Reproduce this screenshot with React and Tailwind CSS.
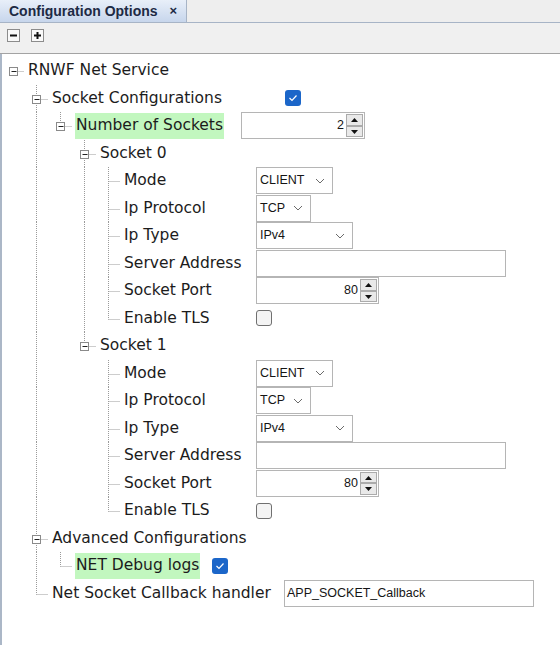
import React from "react";

const treeFont = { fontFamily: '"DejaVu Sans", Verdana, sans-serif' };

// one 24px column of the tree guides, drawn as svg
const Guide = ({ width = 24, vert = "none", stub = false, box = false }) => {
  const cx = width === 22 ? 11.5 : 12.5;
  const cy = 14.5;
  return (
    <svg width={width} height="27.5" className="shrink-0">
      {vert !== "none" && (
        <line
          x1={cx}
          y1="0"
          x2={cx}
          y2={vert === "full" ? 27.5 : cy}
          stroke="#9a9a9a"
          strokeDasharray="1 1"
        />
      )}
      {stub && (
        <line x1={cx} y1={cy} x2={width} y2={cy} stroke="#9a9a9a" strokeDasharray="1 1" />
      )}
      {box && (
        <g>
          <rect x={cx - 4} y={cy - 4} width="8" height="8" fill="#fff" stroke="#8a8a8a" />
          <line x1={cx - 2} y1={cy} x2={cx + 3} y2={cy} stroke="#222" />
        </g>
      )}
    </svg>
  );
};

const Chevron = () => (
  <svg width="10" height="6" viewBox="0 0 10 6">
    <polyline points="1,1 5,5 9,1" fill="none" stroke="#6b6b6b" strokeWidth="1" />
  </svg>
);

const Select = ({ value, w }) => (
  <div
    className={`${w} h-[27px] border border-[#b5b5b5] bg-white flex items-center justify-between pl-[3px] pr-[7px] text-[12.5px] text-[#151515]`}
    style={{ fontFamily: '"Liberation Sans", Arial, sans-serif' }}
  >
    <span>{value}</span>
    <Chevron />
  </div>
);

const TextField = ({ value = "", w }) => (
  <div
    className={`${w} h-[27px] border border-[#b5b5b5] bg-white flex items-center pl-[2px] text-[12.5px] text-[#151515]`}
    style={{ fontFamily: '"Liberation Sans", Arial, sans-serif' }}
  >
    {value}
  </div>
);

const Arrow = ({ up }) => (
  <svg width="7" height="4" viewBox="0 0 7 4">
    <polygon points={up ? "0,4 7,4 3.5,0" : "0,0 7,0 3.5,4"} fill="#111" />
  </svg>
);

const Spinner = ({ value, w }) => (
  <div
    className={`${w} h-[27px] border border-[#b5b5b5] bg-white flex items-stretch text-[12.5px] text-[#151515]`}
    style={{ fontFamily: '"Liberation Sans", Arial, sans-serif' }}
  >
    <div className="flex-1 flex items-center justify-end pr-[2px]">{value}</div>
    <div className="flex flex-col py-[1px] pr-[1px]">
      <div className="w-[17px] h-[12px] border border-[#ababab] bg-[#e9e9e9] flex items-center justify-center">
        <Arrow up />
      </div>
      <div className="w-[17px] h-[12px] border border-[#ababab] bg-[#e9e9e9] flex items-center justify-center">
        <Arrow />
      </div>
    </div>
  </div>
);

const Check = ({ checked }) =>
  checked ? (
    <div className="w-[16px] h-[16px] rounded-[3px] bg-[#1b66c9] flex items-center justify-center">
      <svg width="10" height="8" viewBox="0 0 10 8">
        <polyline points="1.5,4 4,6.5 8.5,1.5" fill="none" stroke="#fff" strokeWidth="1.2" />
      </svg>
    </div>
  ) : (
    <div className="w-[16px] h-[16px] rounded-[3px] border border-[#707070] bg-[#f4f4f4]" />
  );

const socketChildren = (lastSocket) => {
  const guides = lastSocket ? [1] : [1, 3];
  return [
    { label: "Mode", level: 4, guides, widget: <Select value="CLIENT" w="w-[77px]" />, lw: "w-[254px]" },
    { label: "Ip Protocol", level: 4, guides, widget: <Select value="TCP" w="w-[55px]" />, lw: "w-[254px]" },
    { label: "Ip Type", level: 4, guides, widget: <Select value="IPv4" w="w-[97px]" />, lw: "w-[254px]" },
    { label: "Server Address", level: 4, guides, widget: <TextField w="w-[250px]" />, lw: "w-[254px]" },
    { label: "Socket Port", level: 4, guides, widget: <Spinner value="80" w="w-[123px]" />, lw: "w-[254px]" },
    { label: "Enable TLS", level: 4, guides, last: true, widget: <Check />, lw: "w-[254px]" },
  ];
};

const rows = [
  { label: "RNWF Net Service", level: 0, guides: [], box: true, root: true },
  { label: "Socket Configurations", level: 1, guides: [], box: true, widget: <Check checked />, lw: "w-[283px]" },
  { label: "Number of Sockets", level: 2, guides: [1], box: true, last: true, green: true, widget: <Spinner value="2" w="w-[124px]" />, lw: "w-[239px]" },
  { label: "Socket 0", level: 3, guides: [1], box: true },
  ...socketChildren(false),
  { label: "Socket 1", level: 3, guides: [1], box: true, last: true },
  ...socketChildren(true),
  { label: "Advanced Configurations", level: 1, guides: [], box: true },
  { label: "NET Debug logs", level: 2, guides: [1], last: true, green: true, widget: <Check checked />, lw: "w-[210px]" },
  { label: "Net Socket Callback handler", level: 1, guides: [], last: true, widget: <TextField value="APP_SOCKET_Callback" w="w-[250px]" />, lw: "w-[282px]" },
];

const TreeRow = ({ row }) => {
  const cols = [];
  for (let k = 0; k < row.level; k++) {
    cols.push(
      <Guide key={k} width={k === 0 ? 22 : 24} vert={row.guides.includes(k) ? "full" : "none"} />
    );
  }
  cols.push(
    <Guide
      key="own"
      width={row.level === 0 ? 22 : 24}
      vert={row.root ? "none" : row.last ? "half" : "full"}
      stub
      box={row.box}
    />
  );
  return (
    <div className="h-[27.5px] flex items-center">
      <div className={`${row.lw || "w-auto"} h-full flex items-center shrink-0`}>
        {cols}
        <span
          className={`ml-[3px] h-[26px] flex items-center px-[1px] text-[15.5px] text-[#1c1c1c] whitespace-nowrap ${
            row.green ? "bg-[#c2f7bf]" : ""
          }`}
          style={treeFont}
        >
          {row.label}
        </span>
      </div>
      {row.widget}
    </div>
  );
};

export default function App() {
  return (
    <div className="w-[560px] h-[645px] bg-white flex flex-col overflow-hidden">
      {/* tab strip */}
      <div className="h-[23px] bg-[#eeeeee] border-b border-[#a7b4c6] flex shrink-0">
        <div
          className="w-[187px] h-full bg-gradient-to-b from-[#e8eff9] to-[#c7d6ec] border-r border-[#a7b4c6] flex items-center justify-between pl-[9px] pr-[9px] text-[14px] font-bold text-[#1d2a44]"
          style={{ fontFamily: '"Liberation Sans", Arial, sans-serif' }}
        >
          <span>Configuration Options</span>
          <span className="text-[13px]">×</span>
        </div>
      </div>

      {/* toolbar */}
      <div className="h-[31px] bg-[#f0f0f0] border-b border-[#a3a3a3] flex items-start pt-[6px] pl-[7px] gap-[11px] shrink-0">
        <div className="w-[13px] h-[13px] border border-[#8c8c8c] bg-[#f9f9f9] flex items-center justify-center">
          <svg width="7" height="7" viewBox="0 0 7 7">
            <rect x="0" y="2.5" width="7" height="2" fill="#111" />
          </svg>
        </div>
        <div className="w-[13px] h-[13px] border border-[#8c8c8c] bg-[#f9f9f9] flex items-center justify-center">
          <svg width="7" height="7" viewBox="0 0 7 7">
            <rect x="0" y="2.5" width="7" height="2" fill="#111" />
            <rect x="2.5" y="0" width="2" height="7" fill="#111" />
          </svg>
        </div>
      </div>

      {/* property tree */}
      <div className="flex-1 border-l-2 border-[#abb7c7] pt-[3px]">
        {rows.map((row, i) => (
          <TreeRow key={i} row={row} />
        ))}
      </div>
    </div>
  );
}
